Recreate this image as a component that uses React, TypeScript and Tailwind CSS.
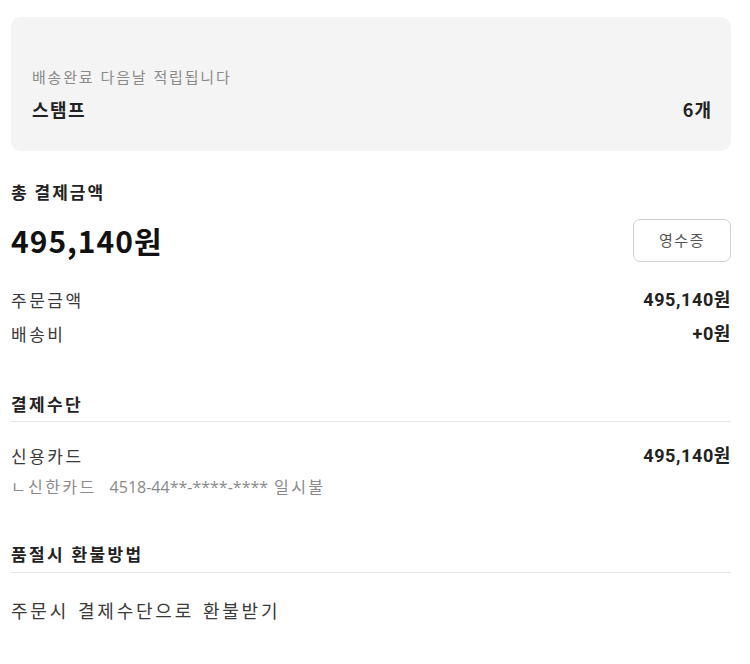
import React from 'react';

const kr = "font-['Noto_Sans_CJK_KR','Noto_Sans',sans-serif]";
const num = "font-['Roboto','Noto_Sans_CJK_KR',sans-serif]";

const Row = ({ label, value }: { label: string; value: string }) => (
  <div className="flex items-center justify-between leading-[26px]">
    <span className="text-[17px] tracking-[2.5px] text-[#3a3a3a]">{label}</span>
    <span className={`${num} text-[18px] font-bold tracking-[0.6px] text-[#222]`}>{value}</span>
  </div>
);

const SectionTitle = ({ children }: { children: React.ReactNode }) => (
  <div className="border-b border-[#e6e6e6] pb-[5px] text-[17px] font-bold tracking-[2.4px] text-[#222]">
    {children}
  </div>
);

export default function App() {
  return (
    <div className={`${kr} min-h-[664px] bg-white pl-[11px] pr-[19px] pt-[17px]`}>
      <div className="flex h-[134px] flex-col justify-end rounded-[10px] bg-[#f4f4f4] pl-[21px] pr-[19px] pb-[28px]">
        <div className="text-[15px] tracking-[1.8px] text-[#8a8a8a] [word-spacing:1px]">
          배송완료 다음날 적립됩니다
        </div>
        <div className="mt-[8px] flex items-center justify-between">
          <span className="text-[18px] font-bold tracking-[1.5px] text-[#222]">스탬프</span>
          <span className="text-[18px] font-bold tracking-[1px] text-[#222]">6개</span>
        </div>
      </div>

      <div className="mt-[28px] text-[17px] font-bold tracking-[2px] text-[#222]">총 결제금액</div>
      <div className="mt-[13px] flex items-center justify-between">
        <span className="text-[30px] font-bold tracking-[1px] text-[#111]">495,140원</span>
        <button className="h-[43px] w-[98px] rounded-[7px] border border-[#d0d0d0] bg-white text-[15px] tracking-[1.5px] text-[#555]">
          영수증
        </button>
      </div>

      <div className="mt-[24px] flex flex-col gap-[8px]">
        <Row label="주문금액" value="495,140원" />
        <Row label="배송비" value="+0원" />
      </div>

      <div className="mt-[44px]">
        <SectionTitle>결제수단</SectionTitle>
        <div className="mt-[21px]">
          <Row label="신용카드" value="495,140원" />
          <div className="mt-[5px] flex items-baseline text-[#8a8a8a]">
            <span className="text-[16px] tracking-[2.4px]">ㄴ신한카드</span>
            <span className="ml-[13px] font-['Open_Sans',sans-serif] text-[16px]">4518-44**-****-****</span>
            <span className="ml-[6px] text-[16px] tracking-[2.4px]">일시불</span>
          </div>
        </div>
      </div>

      <div className="mt-[42px]">
        <SectionTitle>품절시 환불방법</SectionTitle>
        <div className="mt-[24px] text-[18px] tracking-[2.8px] text-[#3a3a3a] [word-spacing:2px]">
          주문시 결제수단으로 환불받기
        </div>
      </div>
    </div>
  );
}
